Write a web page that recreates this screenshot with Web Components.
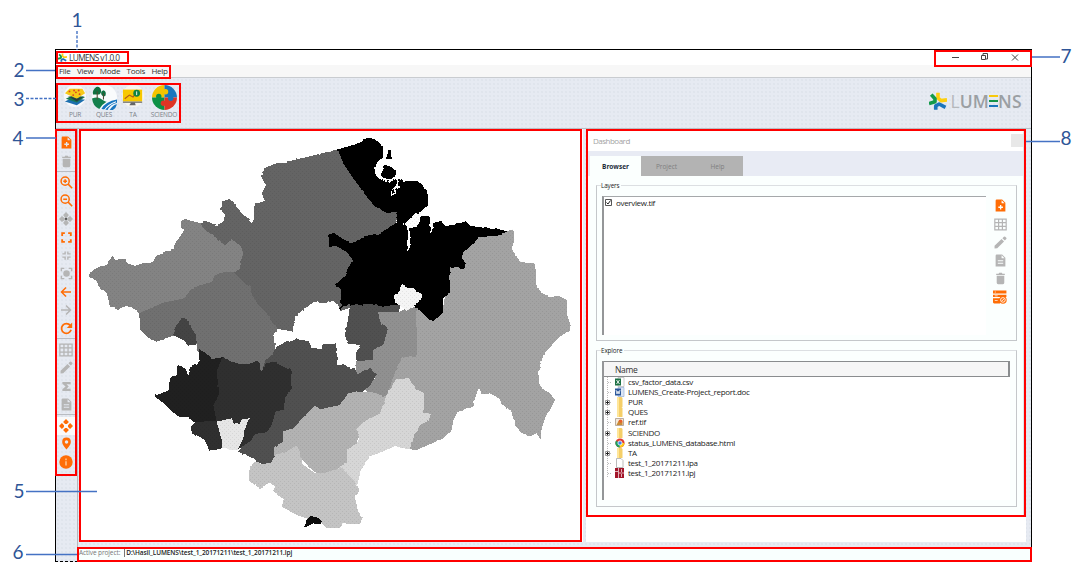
<!DOCTYPE html>
<html lang="en">
<head>
<meta charset="utf-8">
<title>LUMENS v1.0.0</title>
<style>
html,body{margin:0;padding:0;background:#fff;overflow:hidden}
body{width:1085px;height:578px;font-family:"Open Sans","Noto Sans",sans-serif}
</style>
</head>
<body>
<lumens-guide></lumens-guide>
<script>
const define = (name, html) => customElements.define(name, class extends HTMLElement {
  connectedCallback() {
    if (this.shadowRoot) return;
    const root = this.attachShadow({ mode: 'open' });
    root.innerHTML = typeof html === 'function' ? html(this) : html;
  }
});

/* Icon artwork on a 24-unit grid */
const ICONS = {
  add: '<path fill="currentColor" fill-rule="evenodd" d="M5 1h10l6 6v16H3V3q0-2 2-2zM14 2.500v5.500h5.500zM11 11v3H8v2.500h3v3h2.500v-3h3V14h-3v-3z"/>',
  trash: '<path fill="currentColor" d="M5 7h14v13q0 2.500-2.500 2.500h-9Q5 22.500 5 20zM4 3h4.500l1-1.500h5l1 1.500H20v2.500H4z"/>',
  zoomin: '<g fill="none" stroke="currentColor" stroke-width="2.800"><circle cx="9.500" cy="9.500" r="7.500"/><path d="M15 15l7.500 7.500M9.500 6v7M6 9.500h7"/></g>',
  zoomout: '<g fill="none" stroke="currentColor" stroke-width="2.800"><circle cx="9.500" cy="9.500" r="7.500"/><path d="M15 15l7.500 7.500M6 9.500h7"/></g>',
  pan: '<path fill="currentColor" d="M12 0l5 5-3.500 3.500h-3L7 5zM12 24l5-5-3.500-3.500h-3L7 19zM0 12l5-5 3.500 3.500v3L5 17zM24 12l-5-5-3.500 3.500v3L19 17z"/>',
  pandark: '<path fill="currentColor" d="M12 0l5 5-3.500 5h-3L7 5zM12 24l5-5-3.500-5h-3L7 19zM0 12l5-5 5 3.500v3L5 17zM24 12l-5-5-5 3.500v3L19 17z"/><circle cx="12" cy="12" r="2" fill="#555"/>',
  expand: '<path fill="none" stroke="currentColor" stroke-width="3.400" d="M4 9V4h5M15 4h5v5M20 15v5h-5M9 20H4v-5"/>',
  shrink: '<path fill="none" stroke="currentColor" stroke-width="3" d="M3 8.500h6V3M15 3v5.500h6M21 15.500h-6V21M9 21v-5.500H3"/>',
  focus: '<path fill="none" stroke="currentColor" stroke-width="2.600" d="M2.500 8V2.500H8M16 2.500h5.500V8M21.500 16v5.500H16M8 21.500H2.500V16"/><circle cx="12" cy="12" r="6" fill="currentColor"/>',
  left: '<path fill="none" stroke="currentColor" stroke-width="3" d="M22 12H4M12 3l-9 9 9 9"/>',
  right: '<path fill="none" stroke="currentColor" stroke-width="3" d="M2 12h18M12 3l9 9-9 9"/>',
  reload: '<path fill="none" stroke="currentColor" stroke-width="3.200" d="M19 6.500A9 9 0 1 0 20.500 14.500"/><path fill="currentColor" d="M22.500 1v10h-10z"/>',
  table: '<path fill="none" stroke="currentColor" stroke-width="2.200" d="M1.500 2h21v20h-21zM1.500 8.500h21M1.500 15.500h21M8.500 2v20M15.500 2v20"/>',
  pencil: '<path fill="currentColor" d="M1 23v-5L14 5.500l4.500 4.500L6 22.500zM15.500 4l2.800-2.800q1.200-1 2.400 0l2 2q1 1.200 0 2.400L20 8.500z"/>',
  sigma: '<path fill="currentColor" d="M3 2h18v5h-9l5 5-5 5h9v5H3v-4l7-6-7-6z"/>',
  doc: '<path fill="currentColor" fill-rule="evenodd" d="M5 1h10l6 6v16H3V3q0-2 2-2zM14 2.500v5.500h5.500zM7 11.500v2h10v-2zM7 16v2h10v-2z"/>',
  pin: '<path fill="currentColor" fill-rule="evenodd" d="M12 1q8 0 8 8 0 5-8 14-8-9-8-14 0-8 8-8zM12 6a3.200 3.200 0 1 0 .1 0z"/>',
  info: '<circle cx="12" cy="12" r="11.500" fill="currentColor"/><path fill="#ffb97c" d="M10.500 10.500h3V18h-3zM10.500 6h3v2.800h-3z"/>',
  layers: '<path fill="currentColor" d="M0 1h23v5H0zM0 8h23v4H0zM0 14h12v9H2q-2 0-2-2z"/><path stroke="#fff" stroke-width="1.200" d="M3 3.500h2M3 10h5M3 18h5"/><circle cx="17" cy="17" r="6.500" fill="currentColor"/><circle cx="17" cy="17" r="4" fill="none" stroke="#fff" stroke-width="1.500"/><path stroke="#fff" stroke-width="1.500" d="M15 19l4-4"/>'
};
define('ui-icon', el => {
  const s = el.getAttribute('size') || 13;
  return `<style>:host{display:block;flex:none;width:${s}px;height:${s}px;color:${el.hasAttribute('on') ? '#ff6d05' : '#b5b5b5'}}svg{display:block;width:100%;height:100%}</style><svg viewBox="0 0 24 24">${ICONS[el.getAttribute('name')]}</svg>`;
});

const STAR = `<g fill="none" stroke-width="4.800" stroke-linejoin="round">
<path stroke="#fdcf10" d="M12 1v7l4 3.500 8-1"/><path stroke="#129a4a" d="M3 3.500l5 5.500v4l-8 2.500"/><path stroke="#1b75bc" d="M9 23.500v-5l4.500-2.500 8.500 4.500"/></g>`;
define('brand-star', `<style>:host{display:block;flex:none}svg{display:block;width:100%;height:100%}</style><svg viewBox="0 0 24 24">${STAR}</svg>`);

define('title-bar', `<style>
:host{display:flex;height:15px;align-items:center;background:#fff;font-size:8.300px;letter-spacing:-.6px;color:#333}
brand-star{width:9px;height:9px;margin:0 2px 0 2px}
svg{margin-left:auto;margin-right:11px;display:block}
</style><brand-star></brand-star><span>LUMENS v1.0.0</span>
<svg width="68" height="10" fill="none" stroke="#444"><path d="M0 5.500h7M29.500 3.500h4v4h-4zM31 3V1.500H35.500V7h-1.500M60 2.500l6 6M66 2.500l-6 6"/></svg>`);

define('menu-bar', `<style>
:host{display:flex;box-sizing:border-box;height:13px;align-items:center;gap:6.500px;padding:0 0 0 3px;background:#f7f7f7;border-bottom:1px solid #c9ccd0;font-size:8px;letter-spacing:-.29px;color:#333;line-height:12px}
</style><span>File</span><span>View</span><span>Mode</span><span>Tools</span><span>Help</span>`);

const MODULES = {
  pur: '<circle cx="12" cy="12" r="12" fill="#f7f8fb"/><path d="M1 18l8-4 14 2-9 6z" fill="#1d6fae"/><path d="M2 15l8-4 13 2-9 6z" fill="#177a53"/><path d="M1 9l5-5 14 0 3 5-9 6z" fill="#f6c918"/><path d="M4 12l10 3 8-3-8 6z" fill="#2b3a42"/><g fill="#d84427"><circle cx="6" cy="7" r="1"/><circle cx="11" cy="6" r="1"/><circle cx="16" cy="6" r="1"/><circle cx="10" cy="11" r="1"/><circle cx="17" cy="10" r="1"/><circle cx="13" cy="8" r="1"/></g>',
  ques: '<circle cx="12" cy="12" r="12" fill="#f9fbfc"/><path d="M0 13q5-2 8 0 4 3 6 3-5 3-7 7Q1 21 0 13z" fill="#14804d"/><path d="M9 23q4-7 15-9v3q-7 2-9 7zM17 24q3-5 7-5.500-1 4-4 5.500z" fill="#1976c0"/><path d="M12 24q3-5 11-8" stroke="#fff" fill="none"/><path d="M1 9q-1-4 3-7 2-1 4 1 2 4-1 6zM9 9q-1-3 2-4 3 1 2 5-2 2-4-1z" fill="#0f7040"/><path d="M5 6v8M11 8v6" stroke="#4a4b32"/>',
  ta: '<circle cx="12" cy="12" r="12" fill="#f7f5f0"/><path d="M1 5h21v13H1z" fill="#f7c800"/><path d="M1 18h21v1.500H1z" fill="#777"/><path d="M10 19h4l1 3H8z" fill="#666"/><path d="M3 15l5-4 4 2 4-5" stroke="#b45b18" fill="none" stroke-width="1.300"/><circle cx="16" cy="9" r="3.700" fill="#128244"/><path d="M16 7v4" stroke="#fff"/>',
  sciendo: '<clipPath id="c"><circle cx="12" cy="12" r="12"/></clipPath><g clip-path="url(#c)"><path fill="#f4c400" d="M0 0h12v12H0z"/><path fill="#1976bd" d="M12 0h12v12H12z"/><path fill="#0d9145" d="M0 12h12v12H0z"/><path fill="#de3524" d="M12 12h12v12H12z"/><circle cx="13" cy="6.500" r="2.600" fill="#f4c400"/><circle cx="18" cy="12.800" r="2.600" fill="#1976bd"/><circle cx="11" cy="17.500" r="2.600" fill="#de3524"/><circle cx="6.500" cy="11" r="2.600" fill="#0d9145"/></g>'
};
define('module-button', el => `<style>
:host{display:flex;flex-direction:column;align-items:center;width:${el.getAttribute('w')}px;color:#7d8289;font-size:6.500px;letter-spacing:-.2px;line-height:9px}
svg{display:block}div{margin-top:auto}</style><svg width="${el.getAttribute('s')}" height="${el.getAttribute('s')}" viewBox="0 0 24 24">${MODULES[el.getAttribute('art')]}</svg><div><slot></slot></div>`);

define('brand-logo', `<style>
:host{display:flex;align-items:center;gap:4px;color:#9b9fa3;font:17.500px/18px "Open Sans",sans-serif;font-weight:600}
brand-star{width:18px;height:18px}
.word{display:flex;align-items:center;width:70px;justify-content:space-between}
.e{display:flex;flex-direction:column;gap:3px;width:9px}.e i{height:2px}
span{margin:0 -.5px}
</style><brand-star></brand-star><div class="word"><span style="font-weight:400;color:#b5b8bc">L</span><span>U</span><span>M</span><span class="e" aria-label="E"><i style="background:#f8c90c"></i><i style="background:#159447"></i><i style="background:#1b75bc"></i></span><span>N</span><span>S</span></div>`);

define('tool-bar', `<style>
:host{display:flex;box-sizing:border-box;height:51px;padding:7px 10px 0 6px;border-bottom:1px solid #b9bdc4}
.mods{display:flex;height:34px;margin-left:-.5px}
brand-logo{margin:6px 0 0 auto;height:20px}
</style><div class="mods"><module-button art="pur" s="22" w="27">PUR</module-button><module-button art="ques" s="25" w="31">QUES</module-button><module-button art="ta" s="22" w="27">TA</module-button><module-button art="sciendo" s="25" w="35">SCIENDO</module-button></div><brand-logo></brand-logo>`);

define('tool-rail', () => {
  const rows = [['add',1],['trash'],0,['zoomin',1],['zoomout',1],['pandark'],['expand',1],['shrink'],['focus'],['left',1],['right'],['reload',1],0,['table'],['pencil'],['sigma'],['doc'],0,['pan',1,'hot'],['pin',1],['info',1]];
  return `<style>
:host{display:flex;flex-direction:column;align-items:center;box-sizing:border-box;width:22px;padding:5px 1px 0 0;border-right:1px solid #b5b8bd}
div{width:20px;height:18.200px;display:flex;align-items:center;justify-content:center;flex:none}
div.hot{background:#fafafa}
hr{width:18px;height:1px;border:0;margin:1px 0 1.300px;background:#b9bcc2;flex:none}
</style>` + rows.map(r => r ? `<div class="${r[2] || ''}"><ui-icon name="${r[0]}" size="${{info:14,table:14,pan:14,pandark:14,shrink:11,sigma:11,left:12,right:12}[r[0]] || 13}" ${r[1] ? 'on' : ''}></ui-icon></div>` : '<hr>').join('');
});

/* Administrative regions, in thirds of a pixel */
const REGIONS = [
['#646464','362,293 378,286 395,296 410,300 430,290 435,270 424,255 426,230 450,222 465,240 490,270 508,282 520,298 524,235 555,228 545,205 558,180 543,155 548,135 580,118 630,108 775,73 960,270 820,545 780,558 775,540 760,528 730,535 700,530 680,548 655,565 645,580 640,605 638,620 615,615 592,612 540,600 400,440'],
['#838383','24,450 40,435 60,424 82,420 88,402 98,393 106,404 136,402 142,415 165,422 190,415 218,412 228,392 248,386 258,378 278,372 288,350 300,335 312,316 302,305 303,290 318,282 330,287 362,293 370,312 390,325 410,340 438,360 455,340 462,350 480,360 490,382 484,410 478,432 460,445 300,545 178,567 165,550 140,543 115,552 90,542 80,503 58,490 45,465'],
['#707070','178,565 215,548 250,533 280,527 312,520 325,505 330,490 370,478 393,472 405,450 430,442 460,442 478,460 497,478 512,486 515,508 535,540 560,565 575,590 592,612 580,630 585,665 590,700 560,740 400,720 348,676 345,640 287,630 262,638 230,650 205,640 180,615'],
['#444444','306,577 325,585 335,610 347,628 349,658 325,662 310,645 280,630 290,602'],
['#505050','552,710 575,690 590,665 610,655 650,643 685,648 695,668 725,673 727,658 765,657 772,675 772,720 805,722 808,730 828,730 832,748 870,727 888,745 880,770 855,795 830,820 720,880 620,945 600,965 582,995 575,1012 545,1018 520,1000 475,980 520,920'],
['#505050','810,543 830,535 870,530 960,535 955,600 925,650 910,660 880,675 878,705 830,708 828,685 840,660 802,655 795,630 803,590'],
['#2f2f2f','385,705 427,697 470,715 500,718 537,710 547,738 557,715 590,715 635,738 632,790 615,820 612,850 585,865 575,900 560,922 525,925 515,945 472,975 425,972 388,977 375,945 335,922 332,905 355,885 380,840'],
['#707070','537,705 555,705 550,738 544,738'],
['#202020','358,675 370,678 395,703 427,697 410,740 418,805 400,840 410,890 345,892 325,875 300,877 270,855 245,830 222,813 265,797 270,760 290,745 290,720 310,725 325,747 338,720 355,715'],
['#e6e6e6','410,890 455,880 462,898 480,898 488,883 508,880 492,920 490,940 472,975 428,972 425,945'],
['#909090','893,562 960,560 980,550 1010,545 1012,700 960,740 925,815 870,808 855,795 880,770 888,750 870,727 832,748 828,708 880,705 880,675 910,660 923,612 920,605 903,600'],
['#a3a3a3','1008,550 1090,545 1108,425 1195,330 1283,318 1300,313 1303,345 1295,370 1310,400 1335,415 1363,415 1368,440 1368,480 1390,510 1410,517 1435,512 1460,525 1462,570 1472,600 1470,615 1440,635 1415,660 1390,690 1375,740 1377,775 1388,792 1410,805 1425,825 1410,855 1395,880 1385,910 1382,943 1370,925 1350,935 1325,925 1305,900 1295,862 1265,840 1260,822 1230,805 1205,808 1197,787 1185,820 1180,845 1160,850 1132,862 1120,885 1115,915 1090,940 1040,962 1005,977 985,970 920,810 950,730 965,697 1012,695'],
['#b2b2b2','612,918 640,910 685,860 705,846 720,853 780,840 785,835 805,803 870,800 922,815 900,865 840,910 830,975 790,1040 720,1055 640,980 583,990 583,965 610,950'],
['#d6d6d6','948,762 985,760 995,775 1033,810 1030,865 1052,865 1045,885 1020,900 995,950 990,973 942,965 870,995 840,1040 832,1083 770,1035 800,1010 800,975 838,950 832,910 850,890 900,865 920,810'],
['#c4c4c4','525,1005 545,1018 575,1012 585,988 610,985 650,962 662,985 668,1018 685,1030 710,1048 735,1043 780,1030 805,1045 832,1083 838,1095 825,1120 835,1160 848,1180 840,1198 790,1195 780,1210 740,1208 725,1195 700,1190 680,1180 650,1170 605,1145 612,1125 580,1097 585,1085 570,1072 540,1090 505,1067 515,1020'],
['#0c0c0c','672,1210 680,1185 692,1173 712,1177 725,1190 720,1198 700,1195'],
['#000000','773,73 847,52 850,42 870,38 885,44 900,55 910,70 910,97 898,105 887,120 885,145 895,155 920,165 935,170 950,160 965,165 970,170 1010,167 1030,180 1042,200 1045,240 1020,262 1010,272 1022,272 1048,272 1052,292 1085,292 1098,304 1130,298 1152,288 1175,303 1240,312 1283,318 1250,334 1195,335 1185,352 1150,382 1145,398 1157,415 1153,432 1110,427 1108,450 1110,505 1090,518 1088,565 1060,588 1045,583 1020,555 1000,540 945,540 910,545 870,537 830,540 805,538 775,558 785,545 782,490 768,478 795,450 818,405 800,380 765,362 747,367 745,330 760,323 810,355 830,350 855,333 900,325 955,290 948,262 920,263 885,245 860,215 820,160 790,115'],
['#ffffff','1046,240 1020,262 1005,265 993,280 970,300 970,292 985,310 980,380 985,378 992,340 989,310 1010,305 1020,290 1022,272'],
['#ffffff','1049,292 1056,330 1059,292'],
['#000000','925,74 934,76 933,92 937,102 917,102 922,90'],
['#000000','915,119 935,127 950,141 941,165 920,162 902,150 908,138'],
['#f5f5f5','963,478 985,490 1000,490 1028,510 1020,530 1000,543 980,558 965,545 945,532 942,512 960,497']
];
const polygons = REGIONS.map(r => `<polygon fill="${r[0]}" points="${r[1]}"/>`).join('');
define('map-view', `<style>
:host{display:block;background:#fff;overflow:hidden}svg{display:block}
</style><svg width="502" height="413" viewBox="0 12 1506 1239" shape-rendering="crispEdges">
<defs><filter id="coast" x="0" y="0" width="1500" height="1240" filterUnits="userSpaceOnUse" color-interpolation-filters="sRGB"><feTurbulence type="fractalNoise" baseFrequency=".05" numOctaves="1" seed="4"/><feDisplacementMap in="SourceGraphic" scale="9" xChannelSelector="R" yChannelSelector="G"/></filter>
<clipPath id="land">${polygons}</clipPath>
<pattern id="dots" width="12" height="12" patternUnits="userSpaceOnUse"><path d="M0 0h3v3H0zM6 6h3v3H6z" fill="#000" opacity=".07"/></pattern></defs>
<g filter="url(#coast)">${polygons}
<path d="M887 149q14 15 40 22l14-13 12 5-2 20-16 12-1 15 12-6-2-13 14-8" fill="none" stroke="#fff" stroke-width="4"/></g>
<path d="M0 0h1500v1240H0z" fill="url(#dots)" clip-path="url(#land)"/>
</svg>`);

define('group-box', `<style>
:host{display:block;position:relative;box-sizing:border-box;border:1px solid #c4c7ca;border-top-color:#dcdfe2}
.label{position:absolute;left:4px;top:-5px;padding:0 2px 0 0;background:#fbfffe;font-size:6.300px;letter-spacing:-.1px;line-height:10px;color:#222}
</style><div class="label"><slot name="label"></slot></div><slot></slot>`);

const FILE_ICONS = {
  folder: '<path d="M2 0h4.500l1 1v9H2z" fill="#f5cf69"/><path d="M2 0h2v10H2z" fill="#ffe69a"/>',
  csv: '<path d="M3 .5h6v9H3z" fill="#fff" stroke="#aaa" stroke-width=".6"/><path d="M0 1.500h6v7H0z" fill="#1e7145"/><path d="M1.500 3l3 4M4.500 3l-3 4" stroke="#fff" stroke-width=".9"/>',
  doc: '<path d="M3 .5h6v9H3z" fill="#dbe5f5" stroke="#8ba6d2" stroke-width=".6"/><path d="M0 1.500h6v7H0z" fill="#2b579a"/><path d="M1 3l1 4 1-3 1 3 1-4" fill="none" stroke="#fff" stroke-width=".8"/>',
  img: '<path d="M.5 1.500h8v7h-8z" fill="#f4eadb" stroke="#a99b8d" stroke-width=".8"/><circle cx="5.500" cy="4.500" r="2" fill="#e8602c"/><path d="M1.500 8l2-4 2 2 2-1v3z" fill="#c98b36"/>',
  chrome: '<circle cx="5" cy="5" r="4.600" fill="#e33b2e"/><path d="M5 5L1 2.700A4.600 4.600 0 0 0 5 9.600z" fill="#1ba260"/><path d="M5 5h4.500A4.600 4.600 0 0 1 4.600 9.600z" fill="#fdc916"/><circle cx="5" cy="5" r="2.100" fill="#3f83f1" stroke="#fff" stroke-width=".8"/>',
  file: '<path d="M1.500.5h4.500l2 2v7H1.500z" fill="#fff" stroke="#aaa" stroke-width=".8"/>',
  lpj: '<path d="M0 0h9v10H0z" fill="#a3152a"/><path d="M0 3.500h3M3.500 0v10M4 5h5M6.500 1v3M6.500 6v3" stroke="#f0d8dc" stroke-width=".8"/>'
};
define('tree-row', el => `<style>
:host{display:flex;align-items:center;height:10.140px;font-size:8px;letter-spacing:-.31px;line-height:10px;color:#222;white-space:nowrap}
.t{flex:none;margin-right:3px}.i{flex:none;margin-right:3px}
</style><svg class="t" width="8" height="10"><path d="M3.500 0v10M4 5.500h4" stroke="#bbb" stroke-dasharray="1 1"/>${el.hasAttribute('branch') ? '<path d="M1.500 3.500h4v4h-4z" fill="#fff" stroke="#999"/><path d="M2 5.500h3M3.500 4v3" stroke="#222"/>' : ''}</svg><svg class="i" width="10" height="10">${FILE_ICONS[el.getAttribute('kind')]}</svg><slot></slot>`);

define('file-tree', `<style>
:host{display:block;box-sizing:border-box;width:408px;height:139px;background:#fff;border-left:2px solid #949698}
.head{box-sizing:border-box;height:16px;padding-left:11px;border:1px solid #8a8c8e;border-left:0;border-right-width:2px;background:#f6f6f6;font-size:8.500px;letter-spacing:-.3px;line-height:15px;color:#333}
</style><div class="head">Name</div><div class="rows">
<tree-row kind="csv">csv_factor_data.csv</tree-row>
<tree-row kind="doc">LUMENS_Create-Project_report.doc</tree-row>
<tree-row kind="folder" branch>PUR</tree-row>
<tree-row kind="folder" branch>QUES</tree-row>
<tree-row kind="img">ref.tif</tree-row>
<tree-row kind="folder" branch>SCIENDO</tree-row>
<tree-row kind="chrome">status_LUMENS_database.html</tree-row>
<tree-row kind="folder" branch>TA</tree-row>
<tree-row kind="file">test_1_20171211.lpa</tree-row>
<tree-row kind="lpj">test_1_20171211.lpj</tree-row></div>`);

define('layer-list', `<style>
:host{display:flex;height:100%}
.list{box-sizing:border-box;width:384px;height:139px;margin:10px 0 0 5px;border-left:2px solid #949698;border-top:1px solid #a5a8aa;background:#fff}
.item{display:flex;align-items:center;height:12px;padding-left:1px;gap:4px;font-size:8px;letter-spacing:-.33px;color:#222}
.tools{display:flex;flex-direction:column;align-items:center;gap:5.200px;width:28px;padding-top:13.500px}
</style><div class="list"><div class="item"><svg width="7" height="7"><path d="M.5.5h6v6h-6z" fill="#fff" stroke="#555"/><path d="M1.500 3.500l1.500 1.500 2.500-3.500" fill="none" stroke="#222"/></svg><span>overview.tif</span></div></div>
<div class="tools"><ui-icon name="add" on></ui-icon><ui-icon name="table"></ui-icon><ui-icon name="pencil"></ui-icon><ui-icon name="doc"></ui-icon><ui-icon name="trash"></ui-icon><ui-icon name="layers" size="14" on></ui-icon></div>`);

define('dash-board', `<style>
:host{display:flex;flex-direction:column;box-sizing:border-box;background:#fbfffe;border-right:2px solid #dfe3ea}
.title{box-sizing:border-box;display:flex;align-items:center;justify-content:space-between;height:22px;padding:2px 0 0 6px;background:#fff;color:#a3a3a3;font-size:8px;letter-spacing:-.5px}
.title i{width:12px;height:13px;background:#e8e8e8}
.tabs{display:flex;align-items:flex-end;height:25px;padding-left:3px;background:#e8ebf4;font-size:6.500px;line-height:21px;text-align:center;color:#7f7f7f}
.tabs div{width:51px;height:20px;background:#b3b3b3}.tabs .on{background:#fbfffe;color:#222b38;font-weight:700}
.pane{display:flex;flex-direction:column;gap:9px;padding:9px 6px 0 9px}
</style><div class="title"><span>Dashboard</span><i></i></div>
<div class="tabs"><div class="on">Browser</div><div>Project</div><div>Help</div></div>
<div class="pane"><group-box style="height:156px"><span slot="label">Layers</span><layer-list></layer-list></group-box>
<group-box style="height:157px;padding:10px 0 0 5px"><span slot="label">Explore</span><file-tree></file-tree></group-box></div>`);

define('status-bar', `<style>
:host{display:flex;align-items:center;box-sizing:border-box;height:14px;margin-left:22px;padding:0 0 2px 1px;background:#f9fffe;font-size:6.500px;letter-spacing:-.1px;line-height:8px;color:#777}
b{margin-left:4px;color:#222;font-weight:600;letter-spacing:-.09px;border-left:1px solid #777;padding-left:1px}
</style><span>Active project:</span><b>D:\\Hasil_LUMENS\\test_1_20171211\\test_1_20171211.lpj</b>`);

define('lumens-window', `<style>
:host{display:flex;flex-direction:column;box-sizing:border-box;width:977px;height:513px;border:1px solid #000;border-bottom:1px dashed #000;background-color:#e6eaf2;background-image:radial-gradient(circle,#e0e4ec .7px,transparent 1px);background-size:4px 4px}
.main{display:flex;height:419px}
.map{width:504px;margin-left:1px;background:#fff;height:413px}
map-view{width:502px;height:413px;margin-left:1px}
.right{margin-left:3px;width:440px;height:413px;background:#fff;display:flex;flex-direction:column;padding-left:1px;box-sizing:border-box}
dash-board{height:388px;width:438px;border-bottom:2px solid #dfe3ea}
</style><title-bar></title-bar><menu-bar></menu-bar><tool-bar></tool-bar>
<div class="main"><tool-rail></tool-rail><div class="map"><map-view></map-view></div><div class="right"><dash-board></dash-board></div></div>
<status-bar></status-bar>`);

/* Numbered call-outs laid over the window */
define('call-out', el => {
  const [x, y, w, h] = el.getAttribute('box').split(' ');
  const [nx, ny] = el.getAttribute('at').split(' ');
  return `<style>:host{display:block}
.box{position:absolute;box-sizing:border-box;left:${x}px;top:${y}px;width:${w}px;height:${h}px;border:2px solid #f00}
.num{position:absolute;left:${nx}px;top:${ny}px;width:12px;text-align:center;font:19px/20px Lato,"Open Sans",sans-serif;color:#2f5597}
</style><div class="box"></div><div class="num"><slot></slot></div>`;
});

define('lumens-guide', `<style>
:host{display:block;box-sizing:border-box;position:relative;width:1085px;height:578px;padding:49px 0 0 55px;background:#fff}
.lines{position:absolute;left:0;top:0}
</style><lumens-window></lumens-window>
<call-out box="56 51 73 13" at="71 10">1</call-out>
<call-out box="56 65 115 14" at="13 60">2</call-out>
<call-out box="56 83 125 40" at="13 89">3</call-out>
<call-out box="55 129 22 347" at="12 128">4</call-out>
<call-out box="79 129 503 413" at="13 481">5</call-out>
<call-out box="77 547 955 15" at="12 542">6</call-out>
<call-out box="934 50 98 17" at="1060 46">7</call-out>
<call-out box="586 129 440 388" at="1060 128">8</call-out>
<svg class="lines" width="1085" height="578" fill="none" stroke="#4472c4" stroke-width="1.400"><path stroke-dasharray="3 1.500" d="M77 31v19M26 98.500h30"/><path d="M26 70.500h29M26 138h30M26 491.500h71M26 554.500h51M1032 57h28M1026 141.500h34"/></svg>`);
</script>
</body>
</html>
